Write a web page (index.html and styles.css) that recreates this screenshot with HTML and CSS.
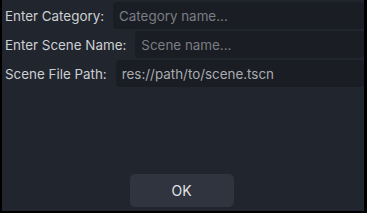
FILE: index.html
```html
<!DOCTYPE html>
<html lang="en">
<head>
    <meta charset="UTF-8">
    <title>New Scene</title>
    <link rel="stylesheet" href="styles.css">
</head>
<body>
    <div class="dialog">
        <div class="fields">
            <div class="row">
                <label for="category">Enter Category:</label>
                <input type="text" id="category" placeholder="Category name...">
            </div>
            <div class="row">
                <label for="sceneName">Enter Scene Name:</label>
                <input type="text" id="sceneName" placeholder="Scene name...">
            </div>
            <div class="row">
                <label for="scenePath">Scene File Path:</label>
                <input type="text" id="scenePath" value="res://path/to/scene.tscn">
            </div>
        </div>
        <div class="actions">
            <button class="ok">OK</button>
        </div>
    </div>
</body>
</html>
```

FILE: styles.css
```css
html, body {
    margin: 0;
    height: 100%;
    background-color: #000;
}
body {
    font-family: Inter, "Noto Sans", sans-serif;
    font-size: 13.4px;
    color: #cdd0d4;
}
.dialog {
    box-sizing: border-box;
    height: 211px;
    margin-left: 2px;
    margin-right: 3px;
    background-color: #21252d;
    display: flex;
    flex-direction: column;
}
.fields {
    display: flex;
    flex-direction: column;
    gap: 2px;
    padding: 2px 0 0 3px;
}
.row {
    display: flex;
    align-items: center;
    gap: 9px;
}
.row label {
    white-space: nowrap;
}
.row input {
    flex: 1;
    min-width: 0;
    height: 27px;
    box-sizing: border-box;
    padding: 0 6px;
    border: none;
    border-radius: 4px;
    background-color: #1a1d23;
    color: #a9acb1;
    font-family: inherit;
    font-size: 13.4px;
    outline: none;
}
.row input::placeholder {
    color: #7b7e84;
}
.actions {
    margin-top: auto;
    display: flex;
    justify-content: center;
    padding-bottom: 4px;
}
.ok {
    width: 104px;
    height: 33px;
    margin-left: -3px;
    border: none;
    border-radius: 5px;
    background-color: #2f343e;
    color: #e2e4e7;
    font-family: inherit;
    font-size: 14px;
}
```
